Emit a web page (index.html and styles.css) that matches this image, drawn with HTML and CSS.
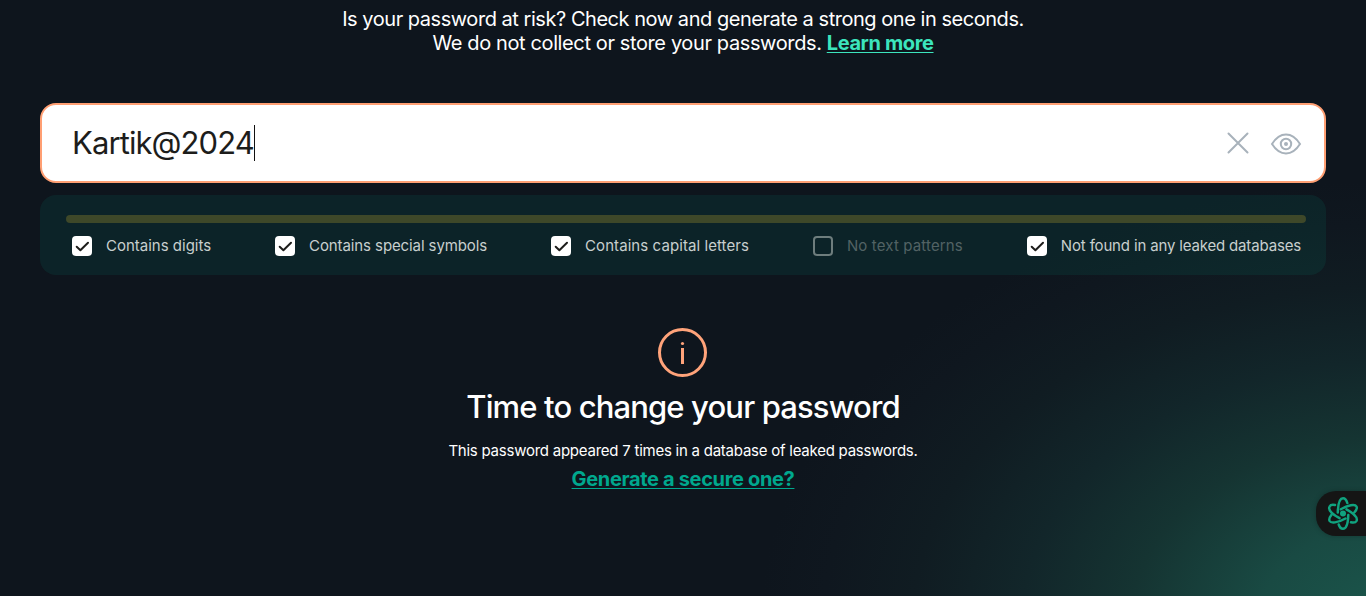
FILE: index.html
```html
<!DOCTYPE html>
<html lang="en">
<head>
<meta charset="utf-8">
<title>Password Checker</title>
<link rel="stylesheet" href="styles.css">
</head>
<body>
<main class="page">
  <p class="intro"><span class="intro-first">Is your password at risk? Check now and generate a strong one in seconds.</span><br><span class="intro-second">We do not collect or store your passwords.</span> <a class="learn" href="#">Learn more</a></p>

  <div class="field">
    <span class="value">Kartik@2024</span><span class="caret"></span>
    <div class="actions">
      <svg class="clear" width="22" height="22" viewBox="0 0 22 22"><path d="M1.5 1.5 20.5 20.5M20.5 1.5 1.5 20.5"/></svg>
      <svg class="eye" width="32" height="24" viewBox="0 0 32 24"><path d="M2 13Q8 3.500 16 3.500T30 13Q24 22.500 16 22.500T2 13Z"/><circle cx="16" cy="13" r="5.200"/><circle class="pupil" cx="16" cy="13" r="2"/></svg>
    </div>
  </div>

  <section class="checks">
    <div class="strength"></div>
    <ul class="rules">
      <li class="rule"><span class="box checked"><svg width="20" height="20" viewBox="0 0 20 20"><path d="m4.7 10.7 3.7 3.5L16 6.7"/></svg></span><span class="label digits">Contains digits</span></li>
      <li class="rule"><span class="box checked"><svg width="20" height="20" viewBox="0 0 20 20"><path d="m4.7 10.7 3.7 3.5L16 6.7"/></svg></span><span class="label symbols">Contains special symbols</span></li>
      <li class="rule"><span class="box checked"><svg width="20" height="20" viewBox="0 0 20 20"><path d="m4.7 10.7 3.7 3.5L16 6.7"/></svg></span><span class="label capitals">Contains capital letters</span></li>
      <li class="rule"><span class="box"></span><span class="label patterns">No text patterns</span></li>
      <li class="rule"><span class="box checked"><svg width="20" height="20" viewBox="0 0 20 20"><path d="m4.7 10.7 3.7 3.5L16 6.7"/></svg></span><span class="label leaks">Not found in any leaked databases</span></li>
    </ul>
  </section>

  <section class="result">
    <svg class="info" width="50" height="50" viewBox="0 0 50 50"><circle cx="24.500" cy="24.500" r="23"/><path d="M24.500 20V36"/><circle class="dot" cx="24.500" cy="15.500" r="1.600"/></svg>
    <h2 class="title">Time to change your password</h2>
    <p class="detail">This password appeared 7 times in a database of leaked passwords.</p>
    <a class="generate" href="#">Generate a secure one?</a>
  </section>
</main>
<button class="assistant" aria-label="Open assistant">
  <svg width="32" height="36" viewBox="0 0 32 36">
    <g class="orbits">
      <path d="M10.800 17.500C11 8 13 3.200 16 3.200C18 3.200 19.500 5 20.300 8"/>
      <path d="M13.800 14.300C21 10 28 8.800 29.500 11.500C30.500 13.300 29.300 15.300 27.300 17.500"/>
      <path d="M19.500 14.300C27 18.500 31 22.800 29.500 26C28.500 27.800 26.300 27.800 24 27.300"/>
      <path d="M21.300 20C21 29 19 33.800 16 33.800C14 33.800 12.500 32 11.700 29.500"/>
      <path d="M18.500 23.500C10.500 28 4 28.500 2.600 26C1.600 24 2.700 22 4.700 19.500"/>
      <path d="M12.500 23.200C5 19 1 14.500 2.600 11.500C3.600 9.500 5.500 9.500 8 10"/>
    </g>
    <circle class="core" cx="16" cy="18.500" r="3"/>
  </svg>
</button>
</body>
</html>
```
FILE: styles.css
```css
* { box-sizing: border-box; }
body {
  margin: 0;
  height: 596px;
  overflow: hidden;
  color: #fff;
  font-family: Inter, "Liberation Sans", sans-serif;
  background: radial-gradient(ellipse 640px 440px at 1400px 620px, #1b574c 0%, #194a43 22%, #153432 42%, #12262a 59%, #101c22 76%, #0f171f 90%, #0e151d 100%), #0e151d;
}
p, h2, ul { margin: 0; padding: 0; }
.page { padding: 7px 40px 0; }
.intro { text-align: center; font-size: 20px; line-height: 24px; letter-spacing: -0.46px; white-space: nowrap; }
.intro-second { letter-spacing: -0.38px; }
.learn { color: #3ce5bd; font-weight: 700; letter-spacing: -0.38px; text-decoration-thickness: 1px; text-underline-offset: 2px; }
.field {
  display: flex;
  align-items: center;
  height: 80px;
  margin-top: 48px;
  padding: 0 22px 0 30px;
  border: 2px solid #ff9f73;
  border-radius: 16px;
  background: #fff;
  color: #1d1d1b;
}
.value { font-size: 31px; line-height: 40px; letter-spacing: -0.91px; }
.caret { width: 1px; height: 36px; background: #111; }
.actions { display: flex; align-items: center; gap: 21px; margin-left: auto; }
.actions svg { fill: none; stroke: #a8b2bb; stroke-width: 2; stroke-linecap: round; }
.actions .pupil { fill: #a8b2bb; stroke: none; }
.checks {
  height: 80px;
  margin-top: 12px;
  padding: 20px 20px 0 26px;
  border-radius: 16px;
  background: rgba(0, 168, 142, 0.1);
}
.strength { height: 8px; border-radius: 4px; background: #3e4829; }
.rules { display: flex; justify-content: space-between; padding: 13px 5px 0 6px; list-style: none; }
.rule { display: flex; align-items: center; gap: 14px; height: 20px; }
.box { display: block; width: 20px; height: 20px; border: 2px solid #6e7d7d; border-radius: 4px; }
.checked { border: 0; background: #fff; }
.box svg { display: block; fill: none; stroke: #1d1d1b; stroke-width: 2; stroke-linecap: round; stroke-linejoin: round; }
.label { font-size: 15px; line-height: 20px; color: #c8cfce; white-space: nowrap; }
.digits { letter-spacing: 0; }
.symbols { letter-spacing: -0.1px; }
.capitals { letter-spacing: 0.08px; }
.patterns { letter-spacing: 0.14px; color: #526264; }
.leaks { letter-spacing: -0.16px; }
.result { display: flex; flex-direction: column; align-items: center; padding-top: 53px; white-space: nowrap; }
.info { fill: none; stroke: #ffa37a; stroke-width: 3; }
.info .dot { fill: #ffa37a; stroke: none; }
.title { margin-top: 9px; font-size: 31px; line-height: 40px; font-weight: 500; letter-spacing: -0.86px; }
.detail { margin-top: 14px; font-size: 15px; line-height: 20px; letter-spacing: -0.24px; }
.generate { margin-top: 6px; font-size: 20px; line-height: 24px; font-weight: 700; letter-spacing: -0.34px; color: #00a88e; text-decoration-thickness: 1px; text-underline-offset: 2px; }
.assistant {
  position: absolute;
  top: 491px;
  right: 0;
  display: flex;
  align-items: center;
  width: 50px;
  height: 45px;
  padding: 0 0 1px 11px;
  border: 0;
  border-radius: 20px 0 0 20px;
  background: #151515;
  box-shadow: 0 0 5px rgba(0, 0, 0, 0.25);
}
.orbits { fill: none; stroke: #10a37f; stroke-width: 2.5; stroke-linecap: round; }
.core { fill: #10a37f; }
```
